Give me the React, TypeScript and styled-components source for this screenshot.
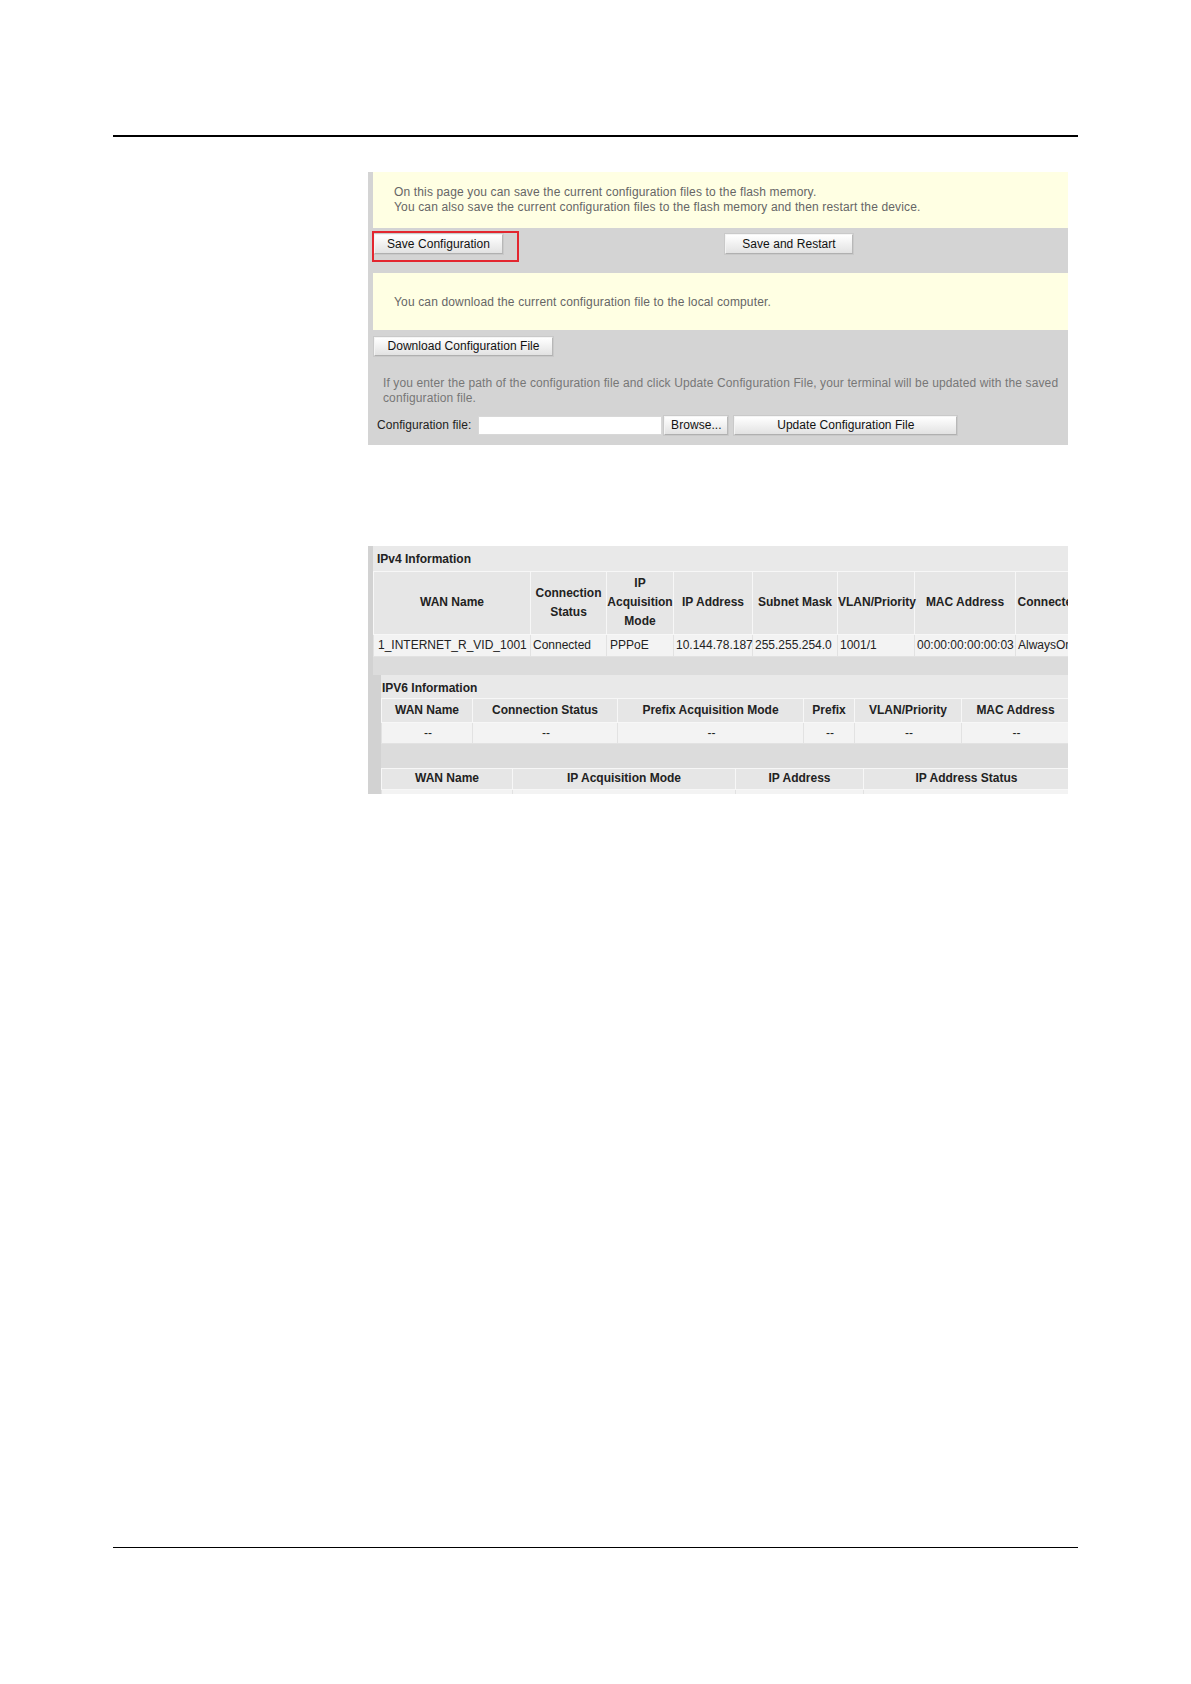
import styled, { createGlobalStyle } from 'styled-components'

const GlobalStyle = createGlobalStyle`
  html, body {
    margin: 0;
    padding: 0;
    background: #fff;
  }
  body {
    font-family: "Liberation Sans", Arial, sans-serif;
    font-size: 12px;
    color: #222;
  }
  * { box-sizing: border-box; }
`

const Page = styled.div`
  width: 1191px;
  height: 1684px;
  display: flex;
  flex-direction: column;
  padding-top: 135px;
`

const Rule = styled.div<{ $bottom?: boolean }>`
  margin: 0 113px;
  height: 1.5px;
  background: #000;
  flex-shrink: 0;
  ${p => p.$bottom ? 'margin-top: auto; margin-bottom: 136px;' : ''}
`

const Content = styled.main`
  margin: 35px 0 0 368px;
  width: 700px;
  display: flex;
  flex-direction: column;
`

/* ---- configuration panel ---- */

const ConfigPanel = styled.section`
  background: #d4d4d4;
  display: flex;
  flex-direction: column;
  padding-bottom: 10px;
`

const Notice = styled.div<{ $h: number; $pt: number }>`
  margin-left: 5px;
  height: ${p => p.$h}px;
  padding: ${p => p.$pt}px 0 0 21px;
  background: #ffffe3;
  color: #666;
  line-height: 15px;
  letter-spacing: 0.15px;
`

const ActionRow = styled.div`
  display: grid;
  grid-template-columns: 351px 1fr;
  height: 45px;
  padding-top: 6px;
`

const ActionCell = styled.div`
  position: relative;
  padding-left: 6px;
`

const Highlight = styled.span`
  position: absolute;
  left: 4px;
  top: -3px;
  width: 147px;
  height: 31px;
  border: 2px solid #e3262f;
  pointer-events: none;
`

const Button = styled.button<{ $w: number; $h: number }>`
  width: ${p => p.$w}px;
  height: ${p => p.$h}px;
  padding: 0;
  margin: 0;
  font-family: "Liberation Sans", Arial, sans-serif;
  font-size: 12px;
  letter-spacing: 0.05px;
  color: #111;
  background: linear-gradient(to bottom, #ffffff 0%, #f2f2f2 45%, #e2e2e2 100%);
  border: 1px solid;
  border-color: #f4f4f4 #b8b8b8 #b0b0b0 #f4f4f4;
  box-shadow: 0 0 0 1px #c9c9c9;
  display: flex;
  align-items: center;
  justify-content: center;
  flex-shrink: 0;
  cursor: pointer;
`

const DownloadRow = styled.div`
  padding: 7px 0 0 6px;
`

const HelpText = styled.p`
  margin: 20px 0 0;
  padding-left: 15px;
  line-height: 15px;
  color: #777;
  letter-spacing: 0.12px;
`

const FileRow = styled.div`
  display: flex;
  align-items: center;
  height: 19px;
  margin-top: 10px;
  padding-left: 9px;
`

const FileLabel = styled.label`
  color: #222;
  margin-right: 7px;
  letter-spacing: 0.05px;
`

const FileInput = styled.input`
  width: 184px;
  height: 19px;
  margin: 0 2px 0 0;
  border: 1px solid #d8d8d8;
  background: #fff;
  flex-shrink: 0;
`

const Spacer = styled.span<{ $w: number }>`
  width: ${p => p.$w}px;
  flex-shrink: 0;
`

/* ---- status panel ---- */

const StatusPanel = styled.section`
  margin-top: 101px;
  height: 248px;
  overflow: hidden;
  background: #d2d2d2;
  padding-left: 5px;
`

const Block = styled.div<{ $indent?: number }>`
  margin-left: ${p => p.$indent || 0}px;
  background: #e9e9e9;
`

const SectionTitle = styled.div<{ $pl: number; $h: number }>`
  height: ${p => p.$h}px;
  padding: 4px 0 0 ${p => p.$pl}px;
  line-height: 19px;
  font-weight: bold;
  color: #222;
  white-space: nowrap;
`

const Band = styled.div<{ $h: number }>`
  height: ${p => p.$h}px;
  background: #dcdcdc;
`

const Grid = styled.table<{ $w: number }>`
  border-collapse: collapse;
  table-layout: fixed;
  width: ${p => p.$w}px;
`

const Col = styled.col<{ $w: number }>`
  width: ${p => p.$w}px;
`

const Th = styled.th<{ $h: number }>`
  height: ${p => p.$h}px;
  padding: 0;
  background: #e6e6e6;
  border: 1px solid #f7f7f7;
  font-weight: bold;
  font-size: 12px;
  line-height: 19px;
  text-align: center;
  color: #222;
  white-space: nowrap;
`

const Td = styled.td<{ $h: number; $center?: boolean; $pl?: number }>`
  height: ${p => p.$h}px;
  padding: 0 0 0 ${p => p.$pl ?? 2}px;
  background: #f3f3f3;
  border: 1px solid #e2e2e2;
  font-size: 12px;
  text-align: ${p => p.$center ? 'center' : 'left'};
  color: #222;
  white-space: nowrap;
`

type Column = { w: number; label: React.ReactNode }

const ipv4Cols: Column[] = [
  { w: 157, label: 'WAN Name' },
  { w: 76, label: <>Connection<br />Status</> },
  { w: 67, label: <>IP<br />Acquisition<br />Mode</> },
  { w: 79, label: 'IP Address' },
  { w: 85, label: 'Subnet Mask' },
  { w: 77, label: 'VLAN/Priority' },
  { w: 101, label: 'MAC Address' },
  { w: 110, label: 'Connected Trigger' },
]

const ipv4Row = [
  { v: '1_INTERNET_R_VID_1001', pl: 4 },
  { v: 'Connected' },
  { v: 'PPPoE', pl: 3 },
  { v: '10.144.78.187' },
  { v: '255.255.254.0' },
  { v: '1001/1' },
  { v: '00:00:00:00:00:03' },
  { v: 'AlwaysOn' },
]

const ipv6Cols: Column[] = [
  { w: 91, label: 'WAN Name' },
  { w: 145, label: 'Connection Status' },
  { w: 186, label: 'Prefix Acquisition Mode' },
  { w: 51, label: 'Prefix' },
  { w: 107, label: 'VLAN/Priority' },
  { w: 108, label: 'MAC Address' },
]

const addrCols: Column[] = [
  { w: 131, label: 'WAN Name' },
  { w: 223, label: 'IP Acquisition Mode' },
  { w: 128, label: 'IP Address' },
  { w: 206, label: 'IP Address Status' },
]

const total = (cols: Column[]) => cols.reduce((s, c) => s + c.w, 0)

const InfoTable = ({ cols, headH, children }: { cols: Column[]; headH: number; children: React.ReactNode }) => (
  <Grid $w={total(cols)}>
    <colgroup>
      {cols.map((c, i) => <Col key={i} $w={c.w} />)}
    </colgroup>
    <thead>
      <tr>
        {cols.map((c, i) => <Th key={i} $h={headH}>{c.label}</Th>)}
      </tr>
    </thead>
    <tbody>{children}</tbody>
  </Grid>
)

const App = () => {
  return (
    <>
      <GlobalStyle />
      <Page>
        <Rule />
        <Content>
          <ConfigPanel>
            <Notice $h={56} $pt={13}>
              On this page you can save the current configuration files to the flash memory.<br />
              You can also save the current configuration files to the flash memory and then restart the device.
            </Notice>
            <ActionRow>
              <ActionCell>
                <Button $w={129} $h={20}>Save Configuration</Button>
                <Highlight />
              </ActionCell>
              <ActionCell>
                <Button $w={128} $h={20}>Save and Restart</Button>
              </ActionCell>
            </ActionRow>
            <Notice $h={57} $pt={22}>
              You can download the current configuration file to the local computer.
            </Notice>
            <DownloadRow>
              <Button $w={179} $h={19}>Download Configuration File</Button>
            </DownloadRow>
            <HelpText>
              If you enter the path of the configuration file and click Update Configuration File, your terminal will be updated with the saved configuration file.
            </HelpText>
            <FileRow>
              <FileLabel htmlFor="cfg-file">Configuration file:</FileLabel>
              <FileInput id="cfg-file" type="text" />
              <Button $w={64} $h={19}>Browse...</Button>
              <Spacer $w={6} />
              <Button $w={223} $h={19}>Update Configuration File</Button>
            </FileRow>
          </ConfigPanel>

          <StatusPanel>
            <Block>
              <SectionTitle $pl={4} $h={25}>IPv4 Information</SectionTitle>
              <InfoTable cols={ipv4Cols} headH={63}>
                <tr>
                  {ipv4Row.map((c, i) => <Td key={i} $h={22} $pl={c.pl}>{c.v}</Td>)}
                </tr>
              </InfoTable>
            </Block>
            <Band $h={18} />
            <Block $indent={8}>
              <SectionTitle $pl={1} $h={23}>IPV6 Information</SectionTitle>
              <InfoTable cols={ipv6Cols} headH={24}>
                <tr>
                  {ipv6Cols.map((_, i) => <Td key={i} $h={21} $center>--</Td>)}
                </tr>
              </InfoTable>
              <Band $h={24} />
              <InfoTable cols={addrCols} headH={21}>
                <tr>
                  {addrCols.map((_, i) => <Td key={i} $h={21} $center>&nbsp;</Td>)}
                </tr>
              </InfoTable>
            </Block>
          </StatusPanel>
        </Content>
        <Rule $bottom />
      </Page>
    </>
  )
}

export default App
